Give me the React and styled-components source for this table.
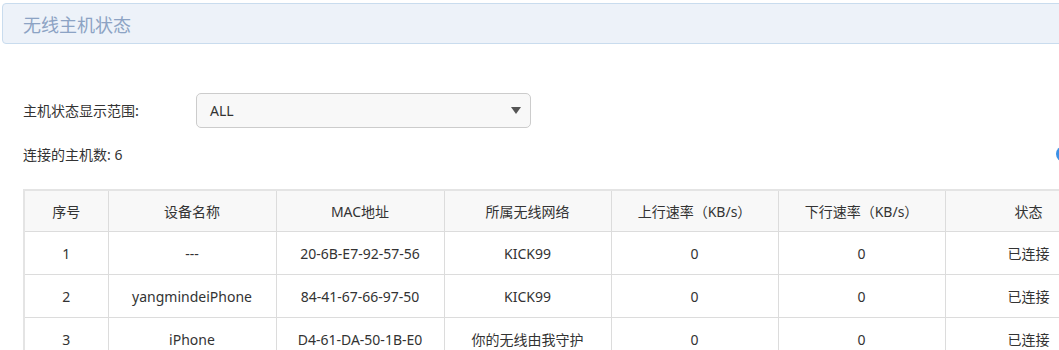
import React from "react";
import styled, { createGlobalStyle } from "styled-components";

const Global = createGlobalStyle`
  html, body { margin: 0; padding: 0; background: #fff; overflow: hidden; }
  body { font-family: "Noto Sans", "Noto Sans CJK SC", sans-serif; color: #333; }
`;

const Page = styled.div`
  width: 1120px;
  padding: 3px 0 0 2px;
`;

const Header = styled.div`
  height: 39px;
  display: flex;
  align-items: center;
  padding-left: 20px;
  background: #edf2f9;
  border: 1px solid #c9dcee;
  border-radius: 4px;
  font-family: "Noto Sans CJK SC", sans-serif;
  font-size: 18px;
  color: #8ca3c4;
`;

const Content = styled.div`
  padding: 49px 0 0 21px;
  display: flex;
  flex-direction: column;
`;

const FormRow = styled.div`
  display: flex;
  align-items: center;
  height: 34px;
`;

const Label = styled.span`
  width: 173px;
  font-family: "Noto Sans CJK SC", sans-serif;
  font-size: 14px;
  color: #333;
`;

const Select = styled.div`
  box-sizing: border-box;
  width: 335px;
  height: 35px;
  display: flex;
  align-items: center;
  justify-content: space-between;
  padding: 0 9px 0 13px;
  background: #f8f8f8;
  border: 1px solid #cccccc;
  border-radius: 5px;
  font-size: 14px;
  color: #333;
`;

const Caret = styled.span`
  width: 0;
  height: 0;
  border-left: 5px solid transparent;
  border-right: 5px solid transparent;
  border-top: 7px solid #555;
`;

const CountRow = styled.div`
  display: flex;
  align-items: center;
  width: 1050px;
  margin-top: 10px;
  height: 34px;
  font-family: "Noto Sans", "Noto Sans CJK SC", sans-serif;
  font-size: 14px;
`;

const HelpDot = styled.span`
  margin-left: auto;
  margin-right: 1px;
  width: 16px;
  height: 16px;
  border-radius: 50%;
  background: #3c91e6;
`;

const Table = styled.table`
  margin-top: 18px;
  border-collapse: collapse;
  table-layout: fixed;
  width: 1089px;
  border-top: 2px solid #e4e4e4;
  border-left: 2px solid #e4e4e4;
`;

const Th = styled.th`
  height: 40px;
  padding: 0;
  font-weight: normal;
  font-family: "Noto Sans", "Noto Sans CJK SC", sans-serif;
  font-size: 14px;
  color: #333;
  background: #f8f8f8;
  border: 1px solid #dcdcdc;
  text-align: center;
`;

const Td = styled.td`
  height: 42px;
  padding: 0;
  font-size: 14px;
  color: #333;
  border: 1px solid #dcdcdc;
  text-align: center;
`;

const cols = [84, 168, 168, 167, 167, 167, 167];
const heads = ["序号", "设备名称", "MAC地址", "所属无线网络", "上行速率（KB/s）", "下行速率（KB/s）", "状态"];
const rows = [
  ["1", "---", "20-6B-E7-92-57-56", "KICK99", "0", "0", "已连接"],
  ["2", "yangmindeiPhone", "84-41-67-66-97-50", "KICK99", "0", "0", "已连接"],
  ["3", "iPhone", "D4-61-DA-50-1B-E0", "你的无线由我守护", "0", "0", "已连接"],
];

export default function App() {
  return (
    <Page>
      <Global />
      <Header>无线主机状态</Header>
      <Content>
        <FormRow>
          <Label>主机状态显示范围:</Label>
          <Select>
            <span>ALL</span>
            <Caret />
          </Select>
        </FormRow>
        <CountRow>
          <span>连接的主机数: 6</span>
          <HelpDot />
        </CountRow>
        <Table>
          <colgroup>
            {cols.map((w, i) => (
              <col key={i} style={{ width: w }} />
            ))}
          </colgroup>
          <thead>
            <tr>
              {heads.map((h) => (
                <Th key={h}>{h}</Th>
              ))}
            </tr>
          </thead>
          <tbody>
            {rows.map((r) => (
              <tr key={r[0]}>
                {r.map((c, i) => (
                  <Td key={i}>{c}</Td>
                ))}
              </tr>
            ))}
          </tbody>
        </Table>
      </Content>
    </Page>
  );
}
